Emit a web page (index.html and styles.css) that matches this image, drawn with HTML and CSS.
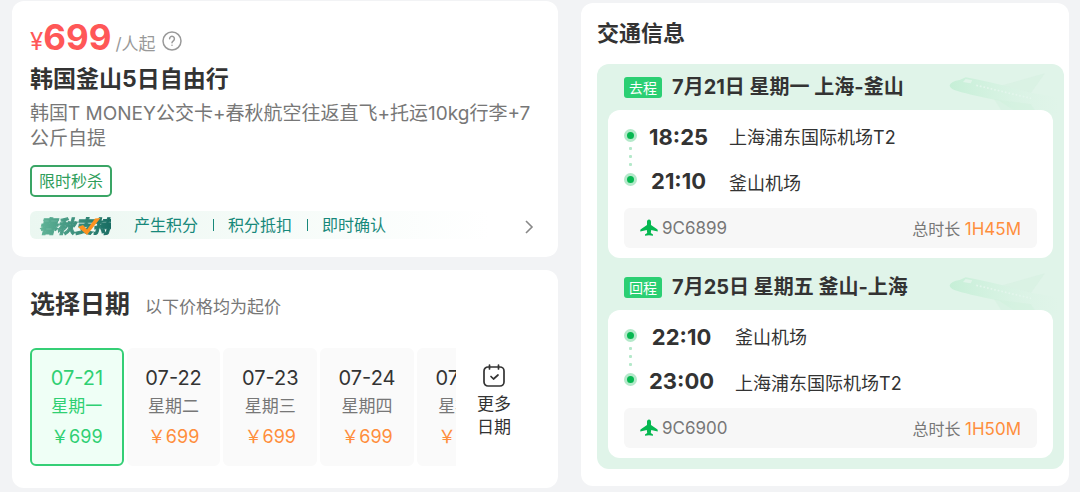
FILE: index.html
```html
<!DOCTYPE html>
<html lang="zh-CN">

<head>
    <meta charset="UTF-8">
    <meta name="viewport" content="width=device-width, initial-scale=1.0">
    <title>韩国釜山5日自由行</title>
    <link rel="stylesheet" href="styles.css">
</head>

<body>
    <main class="page">
        <div class="column">
            <section class="card product">
                <div class="price-row">
                    <span class="currency">¥</span><span class="amount">699</span>
                    <span class="unit">/人起</span>
                    <button class="help" type="button" aria-label="价格说明">
                        <svg width="20" height="20" viewBox="0 0 20 20" fill="none" stroke="#999" stroke-width="1.5" stroke-linecap="round">
                            <circle cx="10" cy="10" r="9" />
                            <path d="M7.6 7.8a2.4 2.4 0 1 1 3.7 2c-.9.6-1.3 1-1.3 2" />
                            <path d="M10 14.2v.1" />
                        </svg>
                    </button>
                </div>
                <h1 class="product-title">韩国釜山5日自由行</h1>
                <p class="product-desc">韩国T MONEY公交卡+春秋航空往返直飞+托运10kg行李+7公斤自提</p>
                <span class="tag">限时秒杀</span>
                <a class="support" href="#support">
                    <span class="support-logo">春秋支持
                        <svg class="support-check" width="24" height="18" viewBox="0 0 24 18">
                            <path d="M1 10l5-2 4 4.500L18 1.500l5.500-.5L10 18z" fill="#fb9220" />
                        </svg>
                    </span>
                    <span class="support-items">
                        <span>产生积分</span>
                        <span>积分抵扣</span>
                        <span>即时确认</span>
                    </span>
                    <svg class="arrow" width="10" height="14" viewBox="0 0 10 14" fill="none" stroke="#888" stroke-width="1.600">
                        <path d="M2 1l6 6-6 6" />
                    </svg>
                </a>
            </section>

            <section class="card dates">
                <div class="dates-head">
                    <h2 class="dates-title">选择日期</h2>
                    <span class="dates-note">以下价格均为起价</span>
                </div>
                <div class="dates-body">
                    <div class="date-list">
                        <button class="date active" type="button">
                            <span class="day">07-21</span>
                            <span class="week">星期一</span>
                            <span class="fare">￥699</span>
                        </button>
                        <button class="date" type="button">
                            <span class="day">07-22</span>
                            <span class="week">星期二</span>
                            <span class="fare">￥699</span>
                        </button>
                        <button class="date" type="button">
                            <span class="day">07-23</span>
                            <span class="week">星期三</span>
                            <span class="fare">￥699</span>
                        </button>
                        <button class="date" type="button">
                            <span class="day">07-24</span>
                            <span class="week">星期四</span>
                            <span class="fare">￥699</span>
                        </button>
                        <button class="date" type="button">
                            <span class="day">07-25</span>
                            <span class="week">星期五</span>
                            <span class="fare">￥699</span>
                        </button>
                    </div>
                    <button class="more" type="button">
                        <svg width="24" height="24" viewBox="0 0 24 24" fill="none" stroke="#333" stroke-width="1.700" stroke-linecap="round" stroke-linejoin="round">
                            <rect x="2" y="3" width="20" height="19" rx="4" />
                            <path d="M7.500 1v4M16.500 1v4M9 12.500l2.500 2.500 4.500-4" />
                        </svg>
                        <span>更多<br>日期</span>
                    </button>
                </div>
            </section>
        </div>

        <section class="card traffic">
            <h2 class="traffic-title">交通信息</h2>
            <div class="legs">
                <article class="leg">
                    <header class="leg-head">
                        <span class="badge">去程</span>
                        <h3 class="leg-title">7月21日 星期一 上海-釜山</h3>
                        <svg class="leg-plane" width="110" height="44" viewBox="0 0 330 132">
                            <defs>
                                <linearGradient id="fade" x1="0" x2="1">
                                    <stop offset="0" stop-color="#c6efd7" />
                                    <stop offset="1" stop-color="#d6f3e2" stop-opacity="0" />
                                </linearGradient>
                            </defs>
                            <path d="M160 40L288 4 246 62z" fill="#d3f0df" opacity=".5" />
                            <path d="M2 40Q6 28 32 24L50 16Q120 28 245 62L330 76 330 122 220 132 150 86Q50 66 16 54 2 48 2 40z" fill="url(#fade)" />
                            <path d="M135 82L245 96 270 132H168z" fill="#cfefdc" opacity=".4" />
                            <path d="M42 30l8-9 20 4-5 9z" fill="#e0f4e9" />
                            <path d="M82 40L246 79" fill="none" stroke="#e3f6ec" stroke-width="5" stroke-dasharray="5 6" />
                        </svg>
                    </header>
                    <div class="leg-card">
                        <div class="route">
                            <div class="track"><i class="stop"></i><i class="step"></i><i class="step"></i><i class="step"></i><i class="stop"></i></div>
                            <div class="times"><time>18:25</time><time>21:10</time></div>
                            <div class="airports"><span>上海浦东国际机场T2</span><span>釜山机场</span></div>
                        </div>
                        <div class="flight">
                            <svg width="18" height="18" viewBox="0 0 18 18">
                                <path d="M9 .5c1.300 0 2 1.200 2 2.500v3l6.200 4.200q.5.400.5 1v1.300l-6.500-1.600-.4 3 2.200 1.500v1.300L9 16.200l-4 .5v-1.300l2.200-1.500-.4-3-6.500 1.600v-1.300q0-.6.5-1L7 6V3C7 1.700 7.700.5 9 .5z" fill="#06b851" />
                            </svg>
                            <span class="flight-no">9C6899</span>
                            <span class="duration">总时长 <b>1H45M</b></span>
                        </div>
                    </div>
                </article>

                <article class="leg">
                    <header class="leg-head">
                        <span class="badge">回程</span>
                        <h3 class="leg-title">7月25日 星期五 釜山-上海</h3>
                        <svg class="leg-plane" width="110" height="44" viewBox="0 0 330 132">
                            <path d="M160 40L288 4 246 62z" fill="#d3f0df" opacity=".5" />
                            <path d="M2 40Q6 28 32 24L50 16Q120 28 245 62L330 76 330 122 220 132 150 86Q50 66 16 54 2 48 2 40z" fill="url(#fade)" />
                            <path d="M135 82L245 96 270 132H168z" fill="#cfefdc" opacity=".4" />
                            <path d="M42 30l8-9 20 4-5 9z" fill="#e0f4e9" />
                            <path d="M82 40L246 79" fill="none" stroke="#e3f6ec" stroke-width="5" stroke-dasharray="5 6" />
                        </svg>
                    </header>
                    <div class="leg-card">
                        <div class="route">
                            <div class="track"><i class="stop"></i><i class="step"></i><i class="step"></i><i class="step"></i><i class="stop"></i></div>
                            <div class="times"><time>22:10</time><time>23:00</time></div>
                            <div class="airports"><span>釜山机场</span><span>上海浦东国际机场T2</span></div>
                        </div>
                        <div class="flight">
                            <svg width="18" height="18" viewBox="0 0 18 18">
                                <path d="M9 .5c1.300 0 2 1.200 2 2.500v3l6.200 4.200q.5.400.5 1v1.300l-6.500-1.600-.4 3 2.200 1.500v1.300L9 16.200l-4 .5v-1.300l2.200-1.500-.4-3-6.500 1.600v-1.300q0-.6.5-1L7 6V3C7 1.700 7.700.5 9 .5z" fill="#06b851" />
                            </svg>
                            <span class="flight-no">9C6900</span>
                            <span class="duration">总时长 <b>1H50M</b></span>
                        </div>
                    </div>
                </article>
            </div>
        </section>
    </main>
</body>

</html>
```
FILE: styles.css
```css
* {
    box-sizing: border-box;
}

body {
    margin: 0;
    background-color: #f2f3f5;
    color: #333;
    font-family: Inter, "Noto Sans CJK SC", sans-serif;
}

h1,
h2,
h3,
p {
    margin: 0;
}

button {
    padding: 0;
    border: none;
    background: none;
    color: inherit;
    font-family: inherit;
    cursor: pointer;
}

svg {
    display: block;
    flex-shrink: 0;
}

.page {
    display: grid;
    grid-template-columns: 546fr 488fr;
    gap: 23px;
    align-items: start;
    padding: 1px 11px 4px 12px;
}

.column {
    display: flex;
    flex-direction: column;
    gap: 13px;
    min-width: 0;
}

.card {
    background-color: #fff;
    border-radius: 12px;
}

/* product */

.product {
    padding: 18px;
}

.price-row {
    display: flex;
    align-items: baseline;
    height: 40px;
    line-height: 36px;
    color: #ff5757;
}

.currency {
    font-size: 24px;
}

.amount {
    font-size: 35px;
    font-weight: 700;
}

.unit {
    margin-left: 4px;
    color: #999;
    font-size: 17px;
}

.help {
    align-self: flex-end;
    margin: 0 0 8px 6px;
}

.product-title {
    margin-top: 4px;
    font-size: 23px;
    line-height: 32px;
}

.product-desc {
    margin-top: 6px;
    color: #777;
    font-size: 19px;
    line-height: 25px;
}

.tag {
    display: block;
    width: fit-content;
    margin-top: 14px;
    padding: 0 7px;
    border: 2px solid #3aa565;
    border-radius: 5px;
    color: #2f9e5b;
    font-size: 16px;
    line-height: 28px;
}

.support {
    display: flex;
    align-items: center;
    height: 28px;
    margin-top: 14px;
    padding: 0 6px 0 9px;
    border-radius: 6px;
    background: linear-gradient(90deg, #ebf7f1, #fff 90%);
    color: #17887a;
    font-size: 16px;
    text-decoration: none;
}

.support-logo {
    position: relative;
    background: linear-gradient(90deg, #62b598, #176c62);
    background-clip: text;
    color: transparent;
    font-size: 18px;
    font-style: italic;
    font-weight: 900;
    -webkit-text-stroke: 1px transparent;
}

.support-check {
    position: absolute;
    top: 5px;
    left: 38px;
}

.support-items {
    display: flex;
    margin-left: 23px;
    line-height: 24px;
}

.support-items span + span::before {
    content: "";
    display: inline-block;
    width: 1px;
    height: 12px;
    margin: 0 14px 0 15px;
    background-color: #17887a;
}

.arrow {
    margin: 4px 0 0 auto;
}

/* dates */

.dates {
    padding: 17px 18px 22px;
}

.dates-head {
    display: flex;
    align-items: baseline;
    gap: 15px;
    line-height: 34px;
}

.dates-title {
    font-size: 25px;
}

.dates-note {
    color: #777;
    font-size: 17px;
}

.dates-body {
    display: flex;
    margin-top: 24px;
}

.date-list {
    display: grid;
    flex: 1;
    grid-auto-flow: column;
    grid-auto-columns: 22%;
    gap: 3px;
    overflow: hidden;
}

.date {
    display: flex;
    flex-direction: column;
    align-items: center;
    height: 118px;
    padding-top: 14px;
    border: 2px solid #fafafa;
    border-radius: 6px;
    background-color: #fafafa;
    line-height: 28px;
}

.day {
    font-size: 20px;
}

.week {
    color: #777;
    font-size: 17px;
}

.fare {
    color: #ff8e3c;
    font-size: 18px;
    line-height: 34px;
}

.date.active {
    border-color: #35cf76;
    background-color: #effff6;
}

.date.active span {
    color: #2fd073;
}

.more {
    display: flex;
    flex-direction: column;
    align-items: center;
    width: 76px;
    margin-right: 8px;
    padding-top: 16px;
    font-size: 17px;
    line-height: 23px;
}

.more svg {
    margin-bottom: 5px;
}

/* traffic */

.traffic {
    margin-top: 2px;
    padding: 14px 5px 17px 16px;
}

.traffic-title {
    font-size: 22px;
    line-height: 32px;
}

.legs {
    margin-top: 15px;
    padding: 0 11px 11px;
    border-radius: 12px;
    background-color: #e0f4e9;
}

.leg + .leg {
    padding-top: 6px;
}

.leg-head {
    position: relative;
    display: flex;
    align-items: center;
    gap: 10px;
    height: 46px;
    padding-left: 16px;
}

.badge {
    padding: 0 5px;
    border-radius: 3px;
    background-color: #2bcf73;
    color: #fff;
    font-size: 14px;
    line-height: 21px;
}

.leg-title {
    font-size: 20px;
    line-height: 28px;
}

.leg-plane {
    position: absolute;
    top: 8px;
    right: -6px;
}

.leg-card {
    position: relative;
    padding: 5px 16px 10px;
    border-radius: 12px;
    background-color: #fff;
}

.route {
    display: flex;
    align-items: flex-start;
}

.track {
    display: flex;
    flex-direction: column;
    align-items: center;
    gap: 5px;
    margin-top: 14px;
}

.stop {
    width: 13px;
    height: 13px;
    border: 3px solid #b4e9ca;
    border-radius: 50%;
    background-color: #06b851;
}

.stop:last-child {
    margin-top: 2px;
}

.step {
    width: 3px;
    height: 3px;
    border-radius: 1px;
    background-color: #b4e9ca;
}

.times {
    display: flex;
    flex-direction: column;
    align-items: center;
    margin: 0 21px 0 12px;
    font-size: 22px;
    font-weight: 700;
    line-height: 44px;
}

.airports {
    display: flex;
    flex-direction: column;
    font-size: 18px;
    line-height: 46px;
}

.flight {
    display: flex;
    align-items: center;
    height: 40px;
    margin-top: 1px;
    padding: 0 16px;
    border-radius: 6px;
    background-color: #f7f7f7;
    color: #777;
    font-size: 16px;
}

.flight-no {
    margin-left: 4px;
    font-size: 17px;
}

.duration {
    margin-left: auto;
}

.duration b {
    color: #ff8e3c;
    font-size: 17px;
    font-weight: 400;
}
```
